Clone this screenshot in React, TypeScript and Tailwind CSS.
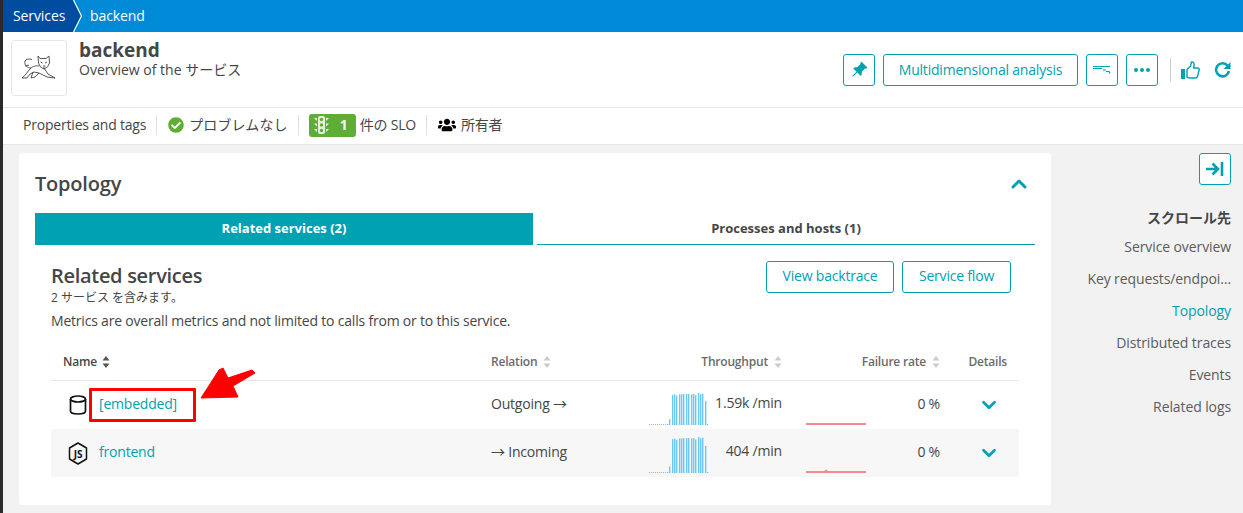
import { ChevronDown, ChevronUp } from 'lucide-react'
import { FaUsers, FaCheckCircle } from 'react-icons/fa'
import { BsPinAngleFill } from 'react-icons/bs'

const bars = [3, 18, 94, 96, 92, 96, 96, 97, 97, 97, 96, 97, 93, 100, 96, 98, 75, 3]

function Spark({ h }: { h: number }) {
  return (
    <svg width="60" height="36" className="text-[#6bc8f5]">
      {Array.from({ length: 10 }).map((_, i) => (
        <rect key={i} x={i * 2} y="35" width="1" height="1" fill="currentColor" />
      ))}
      {bars.map((b, i) => (
        <rect key={i} x={Math.round(18 + i * 2.35)} y={36 - (b / 100) * h} width="1.4" height={(b / 100) * h} fill="currentColor" />
      ))}
    </svg>
  )
}

function FailLine({ bump }: { bump?: boolean }) {
  return (
    <svg width="60" height="6" className="block">
      <rect x="0" y="3" width="60" height="2" fill="#f58a90" />
      {bump && <path d="M18 3l2-1.5 2 1.5z" fill="#f58a90" />}
    </svg>
  )
}

function Sort({ active }: { active?: boolean }) {
  return (
    <svg width="8" height="12" viewBox="0 0 8 12" className={active ? 'text-[#555]' : 'text-[#ccc]'}>
      <path d="M4 0l3.5 4.5h-7zM4 12L.5 7.5h7z" fill="currentColor" />
    </svg>
  )
}

function Cat() {
  return (
    <svg width="36" height="26" viewBox="0 0 36 26" fill="none" stroke="#444" strokeWidth="0.9">
      <path d="M17 1l2 2.5h6L28 1l.5 7-2 4-3.5 2-3.5-2-2-4z" />
      <path d="M19.5 7l2 1M26 7l-2 1M22 11h2.5M23 12v2" />
      <path d="M18 11c-3-.5-6 0-9 3-2 2-4 6-8 9h5l3-4 4-2 5 1 8 4 8 1-7-4-4-6" />
      <path d="M10 13C6 13 3 10 4 6c1-2 4-2.5 7-1.5" />
      <path d="M12 17l-2 6 4-1 4-4M6 4l-2 2M8 10l-4 1" />
    </svg>
  )
}

function TrafficLight() {
  return (
    <svg width="17" height="20" viewBox="0 0 17 20" fill="#e4f2dc">
      <rect x="5" y="1" width="7" height="18" rx="2" />
      <path d="M1 3h3v3zM16 3h-3v3zM1 8.5h3v3zM16 8.5h-3v3zM1 14h3v3zM16 14h-3v3z" />
      <circle cx="8.5" cy="4.5" r="1.7" fill="#5ead35" />
      <circle cx="8.5" cy="10" r="1.7" fill="#5ead35" />
      <circle cx="8.5" cy="15.5" r="1.7" fill="#5ead35" />
    </svg>
  )
}

function Row({ icon, name, relation, value, shade, sparkH, bump, children }: any) {
  return (
    <div className={`relative grid grid-cols-[428px_161px_154px_158px_67px] h-12 items-center text-sm ${shade ? 'bg-[#f7f7f7]' : 'bg-white'}`}>
      <div className="flex items-center pl-[15px] gap-[10px]">
        <span className="w-[23px] flex justify-center">{icon}</span>
        <a className="text-[#00a1b2] pb-[2px]">{name}</a>
      </div>
      <div className="pl-3 pb-[2px]">{relation}</div>
      <div className="flex justify-between items-end self-end pb-[4px] pl-[9px] pr-3 h-full">
        <Spark h={sparkH} />
        <span className="self-center pb-[1px]">{value}</span>
      </div>
      <div className="relative flex justify-end items-center pr-3 pl-3 h-full">
        <div className="absolute left-3 bottom-[3px]"><FailLine bump={bump} /></div>
        <span className="pb-[2px]">0 %</span>
      </div>
      <div className="flex justify-center pl-[6px]">
        <ChevronDown size={22} strokeWidth={3} className="text-[#00a1b2]" />
      </div>
      {children}
    </div>
  )
}

export default function App() {
  return (
    <div className="flex w-[1243px] h-[513px] overflow-hidden bg-[#f2f2f2] text-[#454646] text-sm font-['Open_Sans','Noto_Sans_CJK_JP',sans-serif] tracking-[-0.2px]">
      <div className="w-[3px] bg-[#2a2a2a] shrink-0" />
      <div className="flex-1 min-w-0 flex flex-col">
        {/* breadcrumb */}
        <div className="h-8 bg-[#0089d6] flex items-center text-white text-sm tracking-[-0.1px]">
          <div className="relative h-8 w-[79px] flex items-center pl-[10px]">
            <div className="absolute inset-0 bg-[#004c9e] [clip-path:polygon(0_0,70px_0,78px_16px,70px_32px,0_32px)]" />
            <svg className="absolute left-0 top-0" width="79" height="32" fill="none" stroke="#fff" strokeWidth="1.2">
              <path d="M70.5 0l8 16-8 16" />
            </svg>
            <span className="relative">Services</span>
          </div>
          <span className="pl-[8px]">backend</span>
        </div>

        {/* title */}
        <div className="h-[76px] bg-white border-b border-[#e6e6e6] flex items-start pl-2 pr-[12px] pt-2">
          <div className="w-14 h-14 border border-[#e6e6e6] rounded-[3px] flex items-center justify-center">
            <Cat />
          </div>
          <div className="ml-3 tracking-normal">
            <div className="text-[19px] leading-5 font-bold">backend</div>
            <div className="text-sm leading-5">Overview of the サービス</div>
          </div>
          <div className="ml-auto self-center -mt-[8px] flex items-center gap-[8px] text-[#00a1b2]">
            <button className="w-8 h-8 border border-[#00a1b2] rounded-[3px] flex items-center justify-center">
              <BsPinAngleFill size={17} />
            </button>
            <button className="h-8 w-[195px] border border-[#00a1b2] rounded-[3px] text-sm">Multidimensional analysis</button>
            <button className="w-8 h-8 border border-[#00a1b2] rounded-[3px] flex items-center justify-center">
              <svg width="18" height="10" viewBox="0 0 18 10" stroke="currentColor" fill="none" strokeWidth="1.2">
                <path d="M0 1.5h17M0 3.5h9M10 5h3M13 6.5h3l1 2" />
              </svg>
            </button>
            <button className="w-8 h-8 border border-[#00a1b2] rounded-[3px] flex items-center justify-center gap-[2px]">
              <span className="w-[4px] h-[4px] rounded-full bg-[#00a1b2]" />
              <span className="w-[4px] h-[4px] rounded-full bg-[#00a1b2]" />
              <span className="w-[4px] h-[4px] rounded-full bg-[#00a1b2]" />
            </button>
            <div className="w-px h-6 bg-[#ccc] ml-[4px]" />
            <svg width="19" height="18" viewBox="0 0 19 18" className="ml-[2px]" fill="none" stroke="currentColor" strokeWidth="1.4">
              <rect x="0" y="8" width="4" height="10" fill="currentColor" stroke="none" />
              <path d="M6 8.5l3.5-3.5 1-4c2-.5 3 1.500 2.500 3.500l-.5 2.500h4c1.500 0 2 1.500 1.500 2.500l-1.500 6c-.3 1-1 1.500-2 1.500H9c-1.500 0-2-.5-3-1z" strokeLinejoin="round" />
            </svg>
            <svg width="17" height="17" viewBox="0 0 17 17" className="ml-[6px]" fill="none" stroke="currentColor" strokeWidth="2.6">
              <path d="M13.5 4.5A6.5 6.5 0 1 0 15 10" />
              <path d="M16.5 1v7h-7z" fill="currentColor" stroke="none" />
            </svg>
          </div>
        </div>

        {/* props */}
        <div className="h-[37px] bg-white border-b border-[#e6e6e6] flex items-center pl-5 pb-[2px] text-sm shrink-0">
          <span>Properties and tags</span>
          <span className="w-px h-5 bg-[#e0e0e0] ml-[10px] mr-[11px]" />
          <FaCheckCircle size={16} className="text-[#5ead35]" />
          <span className="ml-[5px] tracking-[0.1px]">プロブレムなし</span>
          <span className="w-px h-5 bg-[#e0e0e0] ml-[10px] mr-[10px]" />
          <span className="h-[23px] w-[47px] rounded-[3px] bg-[#5ead35] text-white font-bold flex items-center pl-[4px] gap-[10px]">
            <TrafficLight />1
          </span>
          <span className="ml-1">件の SLO</span>
          <span className="w-px h-5 bg-[#e0e0e0] ml-[10px] mr-[11px]" />
          <FaUsers size={18} className="text-black" />
          <span className="ml-[5px]">所有者</span>
        </div>

        <div className="flex-1 flex min-h-0 pl-4 pt-2">
          {/* card */}
          <div className="w-[1032px] h-[352px] bg-white rounded-[3px] px-4 shrink-0">
            <div className="h-[60px] flex items-center justify-between pt-[2px]">
              <h2 className="text-[20px] font-semibold">Topology</h2>
              <ChevronUp size={24} strokeWidth={3} className="text-[#00a1b2] mr-[4px]" />
            </div>
            <div className="grid grid-cols-[498px_498px] gap-1 font-bold text-[13px] tracking-normal">
              <div className="h-8 bg-[#00a1b2] text-white border-b border-[#00a1b2] flex items-center justify-center">Related services (2)</div>
              <div className="h-8 border-b border-[#00a1b2] flex items-center justify-center">Processes and hosts (1)</div>
            </div>
            <div className="px-4 pt-4">
              <div className="flex justify-between">
                <div>
                  <h3 className="text-[20px] font-semibold leading-6 mt-[3px] tracking-[-0.3px]">Related services</h3>
                  <div className="text-xs leading-4 mt-[2px] tracking-[0px]">2 サービス を含みます。</div>
                  <div className="text-sm leading-5 mt-[5px]">Metrics are overall metrics and not limited to calls from or to this service.</div>
                </div>
                <div className="flex gap-2 pr-2 text-[#00a1b2] h-8">
                  <button className="w-32 border border-[#00a1b2] rounded-[3px] text-sm pb-[2px]">View backtrace</button>
                  <button className="w-[109px] border border-[#00a1b2] rounded-[3px] text-sm pb-[2px]">Service flow</button>
                </div>
              </div>
              <div className="grid grid-cols-[428px_161px_154px_158px_67px] h-[37px] mt-[13px] items-center border-b border-[#e6e6e6] text-xs font-semibold">
                <div className="pl-3 flex items-center gap-[5px]">Name <Sort active /></div>
                <div className="pl-3 flex items-center gap-[6px] text-[#6b6b6b]">Relation <Sort /></div>
                <div className="pr-3 flex items-center justify-end gap-[6px] text-[#6b6b6b]">Throughput <Sort /></div>
                <div className="pr-3 flex items-center justify-end gap-[6px] text-[#6b6b6b]">Failure rate <Sort /></div>
                <div className="pr-3 text-right text-[#6b6b6b]">Details</div>
              </div>
              <Row
                name="[embedded]"
                relation="Outgoing →"
                value="1.59k /min"
                sparkH={32}
                icon={
                  <svg width="18" height="20" viewBox="0 0 18 20" fill="none" stroke="#111" strokeWidth="1.7">
                    <path d="M1.5 4v12c0 1.8 3 3 7.5 3s7.5-1.2 7.5-3V4" />
                    <ellipse cx="9" cy="4" rx="7.5" ry="3" />
                  </svg>
                }
              >
                <div className="absolute left-[38px] top-[7px] w-[107px] h-[34px] border-[3px] border-[#f00] rounded-[1px]" />
                <svg className="absolute left-[147px] -top-[16px]" width="62" height="34" viewBox="0 0 62 34" fill="#f00">
                  <path d="M3 33L21 5l4-2 5 10 24-8 3 3-22 13 5 11-37 1z" stroke="#f00" strokeLinejoin="round" />
                </svg>
              </Row>
              <Row
                shade
                bump
                name="frontend"
                relation="→ Incoming"
                value="404 /min"
                sparkH={36}
                icon={
                  <svg width="20" height="23" viewBox="0 0 20 23" fill="none">
                    <path d="M10 1l8.5 5v11L10 22l-8.5-5V6z" stroke="#111" strokeWidth="1.5" strokeLinejoin="round" />
                    <text x="10" y="15.5" textAnchor="middle" fontSize="10" fontWeight="700" fill="#111" fontFamily="Open Sans">JS</text>
                  </svg>
                }
              />
            </div>
          </div>

          {/* sidebar */}
          <div className="flex-1 flex flex-col items-end pr-3 text-sm tracking-[-0.1px] text-[#5c5c5c]">
            <button className="w-8 h-8 bg-white border border-[#00a1b2] rounded-[3px] flex items-center justify-center text-[#00a1b2]">
              <svg width="18" height="16" viewBox="0 0 18 16" fill="none" stroke="currentColor" strokeWidth="2.6">
                <path d="M0 8h11M6.5 2.5L12 8l-5.5 5.5M16 1v14" />
              </svg>
            </button>
            <div className="mt-[21px] font-bold text-[#454646] h-6 flex items-center tracking-normal">スクロール先</div>
            <div className="h-8 flex items-center mt-[1px]">Service overview</div>
            <div className="h-8 flex items-center">Key requests/endpoi…</div>
            <div className="h-8 flex items-center text-[#00a1b2]">Topology</div>
            <div className="h-8 flex items-center">Distributed traces</div>
            <div className="h-8 flex items-center">Events</div>
            <div className="h-8 flex items-center">Related logs</div>
          </div>
        </div>
      </div>
    </div>
  )
}
